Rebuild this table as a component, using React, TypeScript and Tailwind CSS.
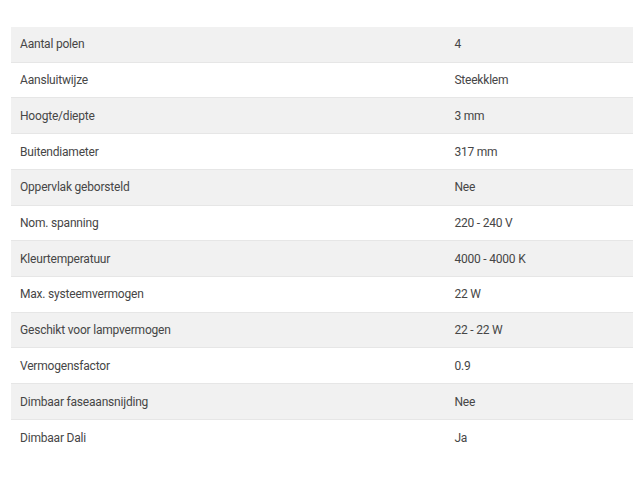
import React from 'react';

const specs: [string, string][] = [
  ['Aantal polen', '4'],
  ['Aansluitwijze', 'Steekklem'],
  ['Hoogte/diepte', '3 mm'],
  ['Buitendiameter', '317 mm'],
  ['Oppervlak geborsteld', 'Nee'],
  ['Nom. spanning', '220 - 240 V'],
  ['Kleurtemperatuur', '4000 - 4000 K'],
  ['Max. systeemvermogen', '22 W'],
  ['Geschikt voor lampvermogen', '22 - 22 W'],
  ['Vermogensfactor', '0.9'],
  ['Dimbaar faseaansnijding', 'Nee'],
  ['Dimbaar Dali', 'Ja'],
];

const App: React.FC = () => {
  return (
    <div className="w-[640px] h-[480px] bg-white pt-[27px] pl-[11px] pr-[7px] font-['Roboto',sans-serif] text-[12px] tracking-[-0.2px] text-[#464646]">
      <div className="flex flex-col">
        {specs.map(([label, value], i) => (
          <div
            key={label}
            className={`flex items-center h-[35.73px] ${i % 2 === 0 ? 'bg-[#f1f1f1]' : 'bg-white'} ${i < specs.length - 1 ? 'border-b border-[#e6e6e6]' : ''}`}
          >
            <div className="w-[70%] pl-[9px]">{label}</div>
            <div className="flex-1 pl-[8px]">{value}</div>
          </div>
        ))}
      </div>
    </div>
  );
};

export default App;
